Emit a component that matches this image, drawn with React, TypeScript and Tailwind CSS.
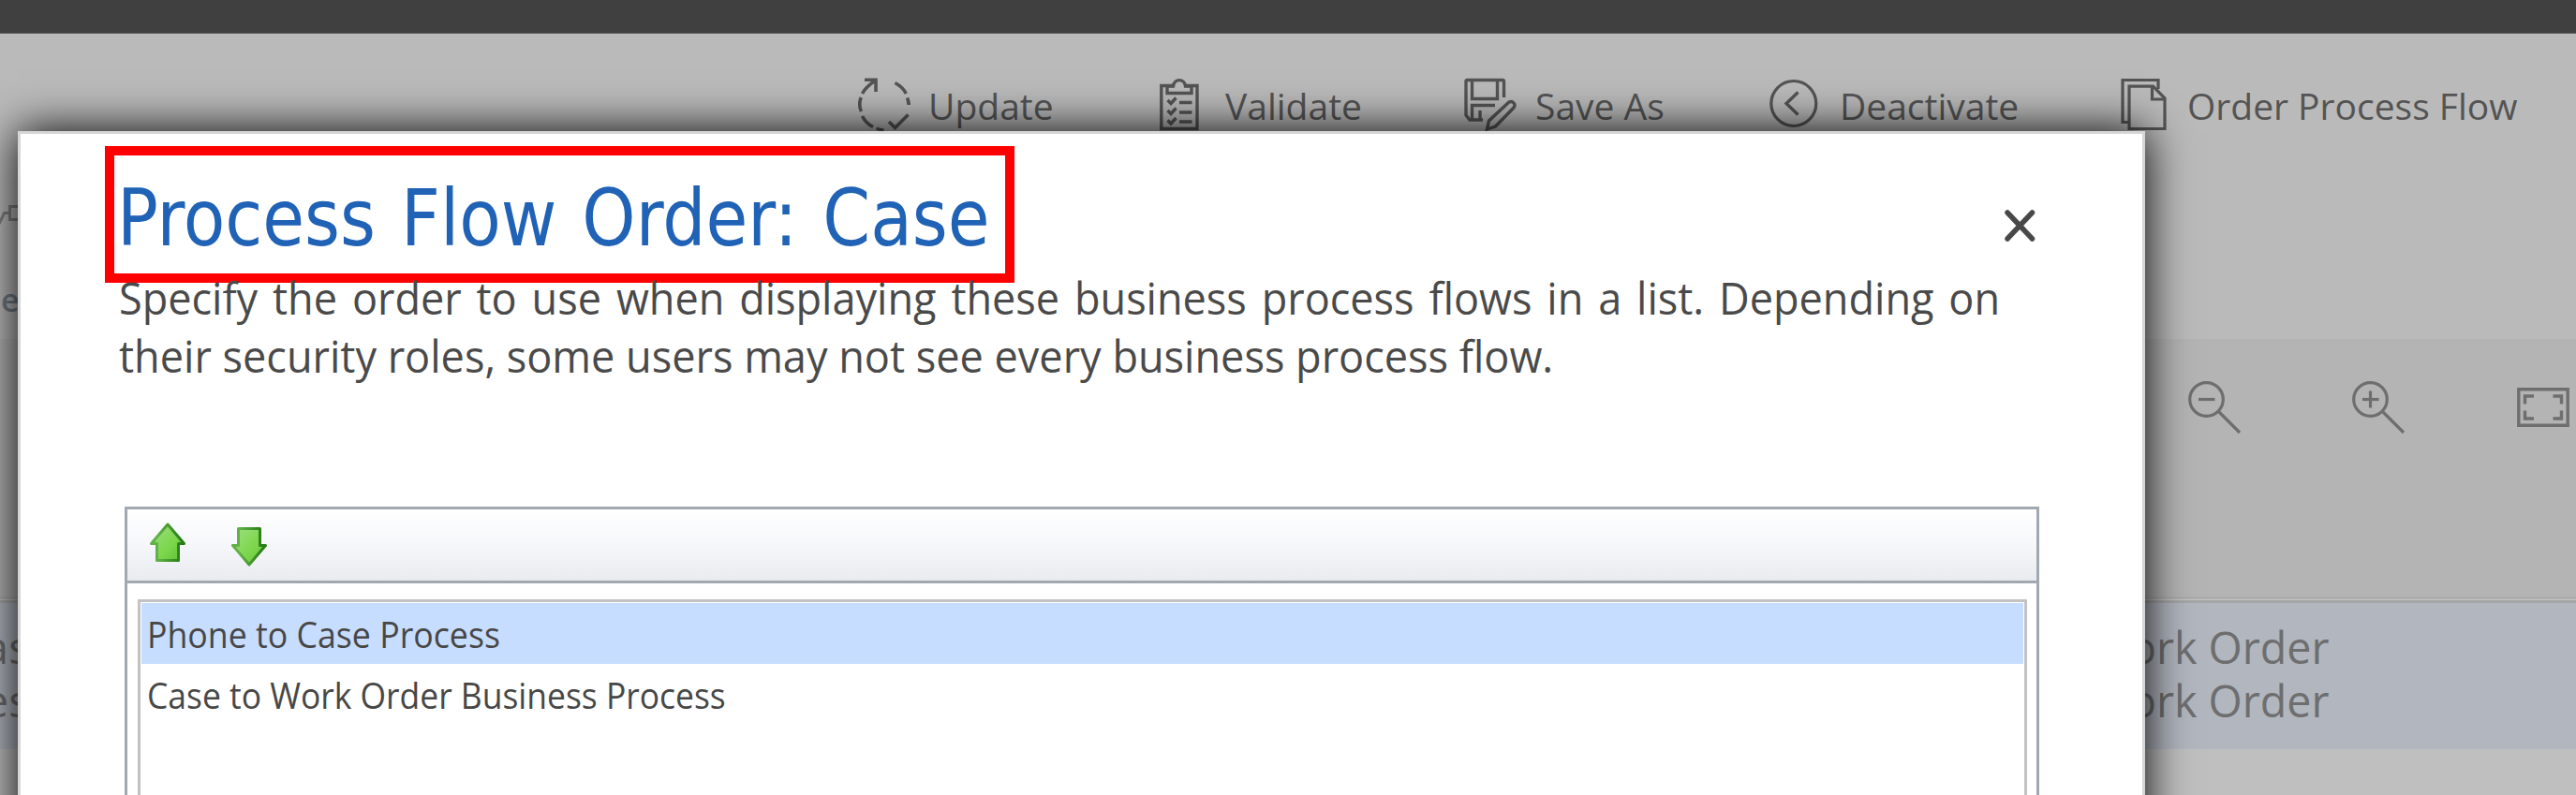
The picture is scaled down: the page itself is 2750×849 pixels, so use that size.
import type { ReactNode } from "react";

const ink = "#545454";

function UpdateIcon() {
  return (
    <svg width="56" height="58" viewBox="0 0 56 58" fill="none" stroke={ink} strokeWidth="3.6">
      <path d="M7 2.2H19V15" />
      <path d="M18.5 3C11 8 7 12 4.5 17" />
      <path d="M3.2 21C1.2 26 1.2 31 3.4 36" />
      <path d="M4.5 41C7 46 11 50 16 52.5" />
      <path d="M19.5 54.2C22 55.2 24.5 55.8 27.5 56" />
      <path d="M39.5 5.5C45 8.5 49 12 51.2 17" />
      <path d="M52.5 21.5C53.6 24 54 26 54.2 29" />
      <path d="M33 47L39.5 53.5L53.5 39.5" />
    </svg>
  );
}

function ValidateIcon() {
  return (
    <svg width="42" height="58" viewBox="0 0 42 58" fill="none" stroke={ink} strokeWidth="3.4">
      <path d="M14 8.5H1.8V54.5H40V8.5H28" />
      <path d="M14.5 9C15.5 0.5 26.5 0.5 27.5 9H34V16.5H8V9Z" />
      <path d="M8.5 24L12 27.5L17.5 21.5M8.5 35L12 38.5L17.5 32.5M8.5 45.5L12 49L17.5 43" />
      <path d="M21 26.5H34.5M21 37H34.5M21 47H34.5" />
    </svg>
  );
}

function SaveAsIcon() {
  return (
    <svg width="56" height="58" viewBox="0 0 56 58" fill="none" stroke={ink} strokeWidth="3.4">
      <path d="M42.5 21V4Q42.5 2.5 41 2.5H3.5Q2 2.5 2 4V40L6 45H20" />
      <path d="M8.5 3V22.5H35.5V3" />
      <path d="M8.5 45V29.5H33" />
      <path d="M17 45V35" />
      <path d="M24.5 55L26.5 46L48 26Q51 24.5 53 27Q55 29.5 53 32L33.5 52Z" />
    </svg>
  );
}

function DeactivateIcon() {
  return (
    <svg width="54" height="58" viewBox="0 0 54 58" fill="none" stroke={ink} strokeWidth="3.2">
      <circle cx="25.8" cy="27.5" r="24" />
      <path d="M30.5 15.5L18 27.5L30.5 39.5" strokeWidth="3.4" />
    </svg>
  );
}

function OrderIcon() {
  return (
    <svg width="50" height="58" viewBox="0 0 50 58" fill="none" stroke={ink} strokeWidth="3.2">
      <path d="M8 47.5H2V2.5H40V12" />
      <path d="M9 9.2H34.5L47 22V54.5H9Z" />
      <path d="M33.5 9.5V23H47" />
    </svg>
  );
}

function ZoomIcon({ plus }: { plus?: boolean }) {
  return (
    <svg width="57" height="57" viewBox="0 0 57 57" fill="none" stroke="#6e6e6e" strokeWidth="3.2">
      <circle cx="19.5" cy="19.5" r="17.8" />
      <path d="M32.5 32.5L55 55" />
      <path d="M11 19.5H28.5" />
      {plus && <path d="M19.5 10.5V28.5" />}
    </svg>
  );
}

function FitIcon() {
  return (
    <svg width="56" height="42" viewBox="0 0 56 42" fill="none" stroke="#6e6e6e" strokeWidth="3.4">
      <path d="M1.8 1.8H54.2V40.2H1.8Z" />
      <path d="M8.5 17.5V9H18M38.5 9H47.5V17.5M47.5 24.5V33H38.5M18 33H8.5V24.5" />
    </svg>
  );
}

function ArrowIcon({ down }: { down?: boolean }) {
  const id = down ? "down" : "up";
  return (
    <svg width="40" height="44" viewBox="0 0 40 44" className={down ? "rotate-180" : ""}>
      <defs>
        <linearGradient id={id} x1={down ? "1" : "0"} y1={down ? "1" : "0"} x2={down ? "0" : "1"} y2={down ? "0" : "1"}>
          <stop offset="0.2" stopColor="#93dc70" />
          <stop offset="0.6" stopColor="#7bd64a" />
          <stop offset="1" stopColor="#5cbd36" />
        </linearGradient>
        <linearGradient id={id + "Edge"} x1={down ? "1" : "0"} y1="0" x2={down ? "0" : "1"} y2="0">
          <stop offset="0.2" stopColor="#62b048" />
          <stop offset="0.9" stopColor="#2a7d18" />
        </linearGradient>
      </defs>
      <path d="M20 3L37.5 23.5H31.5V41.5H8.5V23.5H2.5Z" fill={`url(#${id})`} stroke={`url(#${id}Edge)`} strokeWidth="3" strokeLinejoin="round" />
    </svg>
  );
}

function Command({ icon, label, width, inset }: { icon: ReactNode; label: string; width: string; inset: string }) {
  return (
    <div className={`flex shrink-0 items-start ${width}`}>
      <div className={`shrink-0 ${inset}`}>{icon}</div>
      <span className="mt-px text-[39px] leading-[58px] whitespace-nowrap text-[#545454]">{label}</span>
    </div>
  );
}

function Backdrop() {
  return (
    <div className="flex h-full w-full flex-col bg-[#bfbfbf]">
      <header className="h-9 shrink-0 border-b border-[#5a5a5a] bg-[#404040]" />
      <section className="flex h-[326px] shrink-0 flex-col bg-[#bababa]">
        <div className="flex pt-[47px] pl-[916px]">
          <Command icon={<UpdateIcon />} label="Update" width="w-[322px]" inset="w-[75px]" />
          <Command icon={<ValidateIcon />} label="Validate" width="w-[325px]" inset="w-[70px]" />
          <Command icon={<SaveAsIcon />} label="Save As" width="w-[326px]" inset="w-[76px]" />
          <Command icon={<DeactivateIcon />} label="Deactivate" width="w-[375px]" inset="w-[75px]" />
          <Command icon={<OrderIcon />} label="Order Process Flow" width="w-[440px]" inset="w-[71px]" />
        </div>
        <svg className="mt-[76px] shrink-0" width="20" height="24" viewBox="0 0 20 24" fill="none" stroke="#808080" strokeWidth="3">
          <path d="M-1 21L4.500 9.500H10M20 2.500H10.500V16.500H20" />
        </svg>
        <div className="mt-[56px] w-5 pl-px text-[34px] leading-[44px] font-semibold text-[#737b87]">e</div>
      </section>
      <section className="flex h-[275px] shrink-0 items-start bg-[#b4b4b4] pt-[45px] pl-[2336px]">
        <div className="w-[175px] shrink-0"><ZoomIcon /></div>
        <div className="w-[176px] shrink-0"><ZoomIcon plus /></div>
        <div className="shrink-0 pt-[7px]"><FitIcon /></div>
      </section>
      <div className="h-[7px] shrink-0 border-t-[3px] border-b-[3px] border-t-[#adadad] border-b-[#a6a6a6] bg-[#c4c4c4]" />
      <section className="flex h-[156px] shrink-0 justify-between bg-[#b1b6bf] pt-[18px] text-[48px] leading-[57px] text-[#6e6e6e]">
        <div className="flex w-[22px] flex-col items-end">
          <span className="mr-[-10px]">as</span>
          <span className="mr-[-10px]">es</span>
        </div>
        <div className="w-[519px] whitespace-nowrap">
          <div className="origin-left scale-x-[.97]">Work Order</div>
          <div className="origin-left scale-x-[.97]">Work Order</div>
        </div>
      </section>
    </div>
  );
}

function Dialog() {
  return (
    <div className="absolute top-[140px] left-[19px] h-[760px] w-[2271px] border-[3px] border-[#d6d6d6] bg-white shadow-[0_0_45px_#000]">
      <div className="flex items-start justify-between pl-[90px]">
        <div className="mt-[13px] h-[146px] w-[971px] border-10 border-[#ff0000] pl-[3px]">
          <h1 className="origin-left scale-x-[.964] font-['DejaVu_Sans_Condensed'] text-[84px] leading-[134px] whitespace-nowrap text-[#1f62b6] [word-spacing:4px]">
            Process Flow Order: Case
          </h1>
        </div>
        <svg className="mt-[80px] mr-[113px]" width="35" height="36" viewBox="0 0 35 36" fill="none" stroke="#484848" strokeWidth="5.5" strokeLinecap="round">
          <path d="M4 4L30.5 32M30.5 4L4 32" />
        </svg>
      </div>
      <div className="-mt-[15px] ml-[105px] text-[48px] leading-[62px] whitespace-nowrap text-[#4a4a4a]">
        <p className="origin-left scale-x-[.938] [word-spacing:4.5px]">
          Specify the order to use when displaying these business process flows in a list. Depending on
        </p>
        <p className="origin-left scale-x-[.939]">
          their security roles, some users may not see every business process flow.
        </p>
      </div>
      <div className="mt-[130px] ml-[111px] h-[400px] w-[2044px] border-[3px] border-[#a2a8b2]">
        <div className="flex h-[79px] items-start border-b-[3px] border-[#a2a8b2] bg-linear-to-b from-white via-[#f6f7fa] to-[#e9ebef] pt-[13px] pl-[23px]">
          <div className="w-[87px]"><ArrowIcon /></div>
          <div className="pt-[5px]"><ArrowIcon down /></div>
        </div>
        <ul className="mt-[17px] ml-[11px] h-[400px] w-[2017px] border-[3px] border-[#c2c2c2] px-px pt-px text-[37.5px] leading-[67px] text-[#474747]">
          <li className="h-[65px] bg-[#c7ddff] pl-[6px]"><span className="inline-block origin-left scale-x-[.952]">Phone to Case Process</span></li>
          <li className="h-[65px] pl-[6px]"><span className="inline-block origin-left scale-x-[.945]">Case to Work Order Business Process</span></li>
        </ul>
      </div>
    </div>
  );
}

export default function App() {
  return (
    <div className="relative h-[849px] w-[2750px] overflow-hidden font-['Open_Sans',sans-serif]">
      <Backdrop />
      <Dialog />
    </div>
  );
}
